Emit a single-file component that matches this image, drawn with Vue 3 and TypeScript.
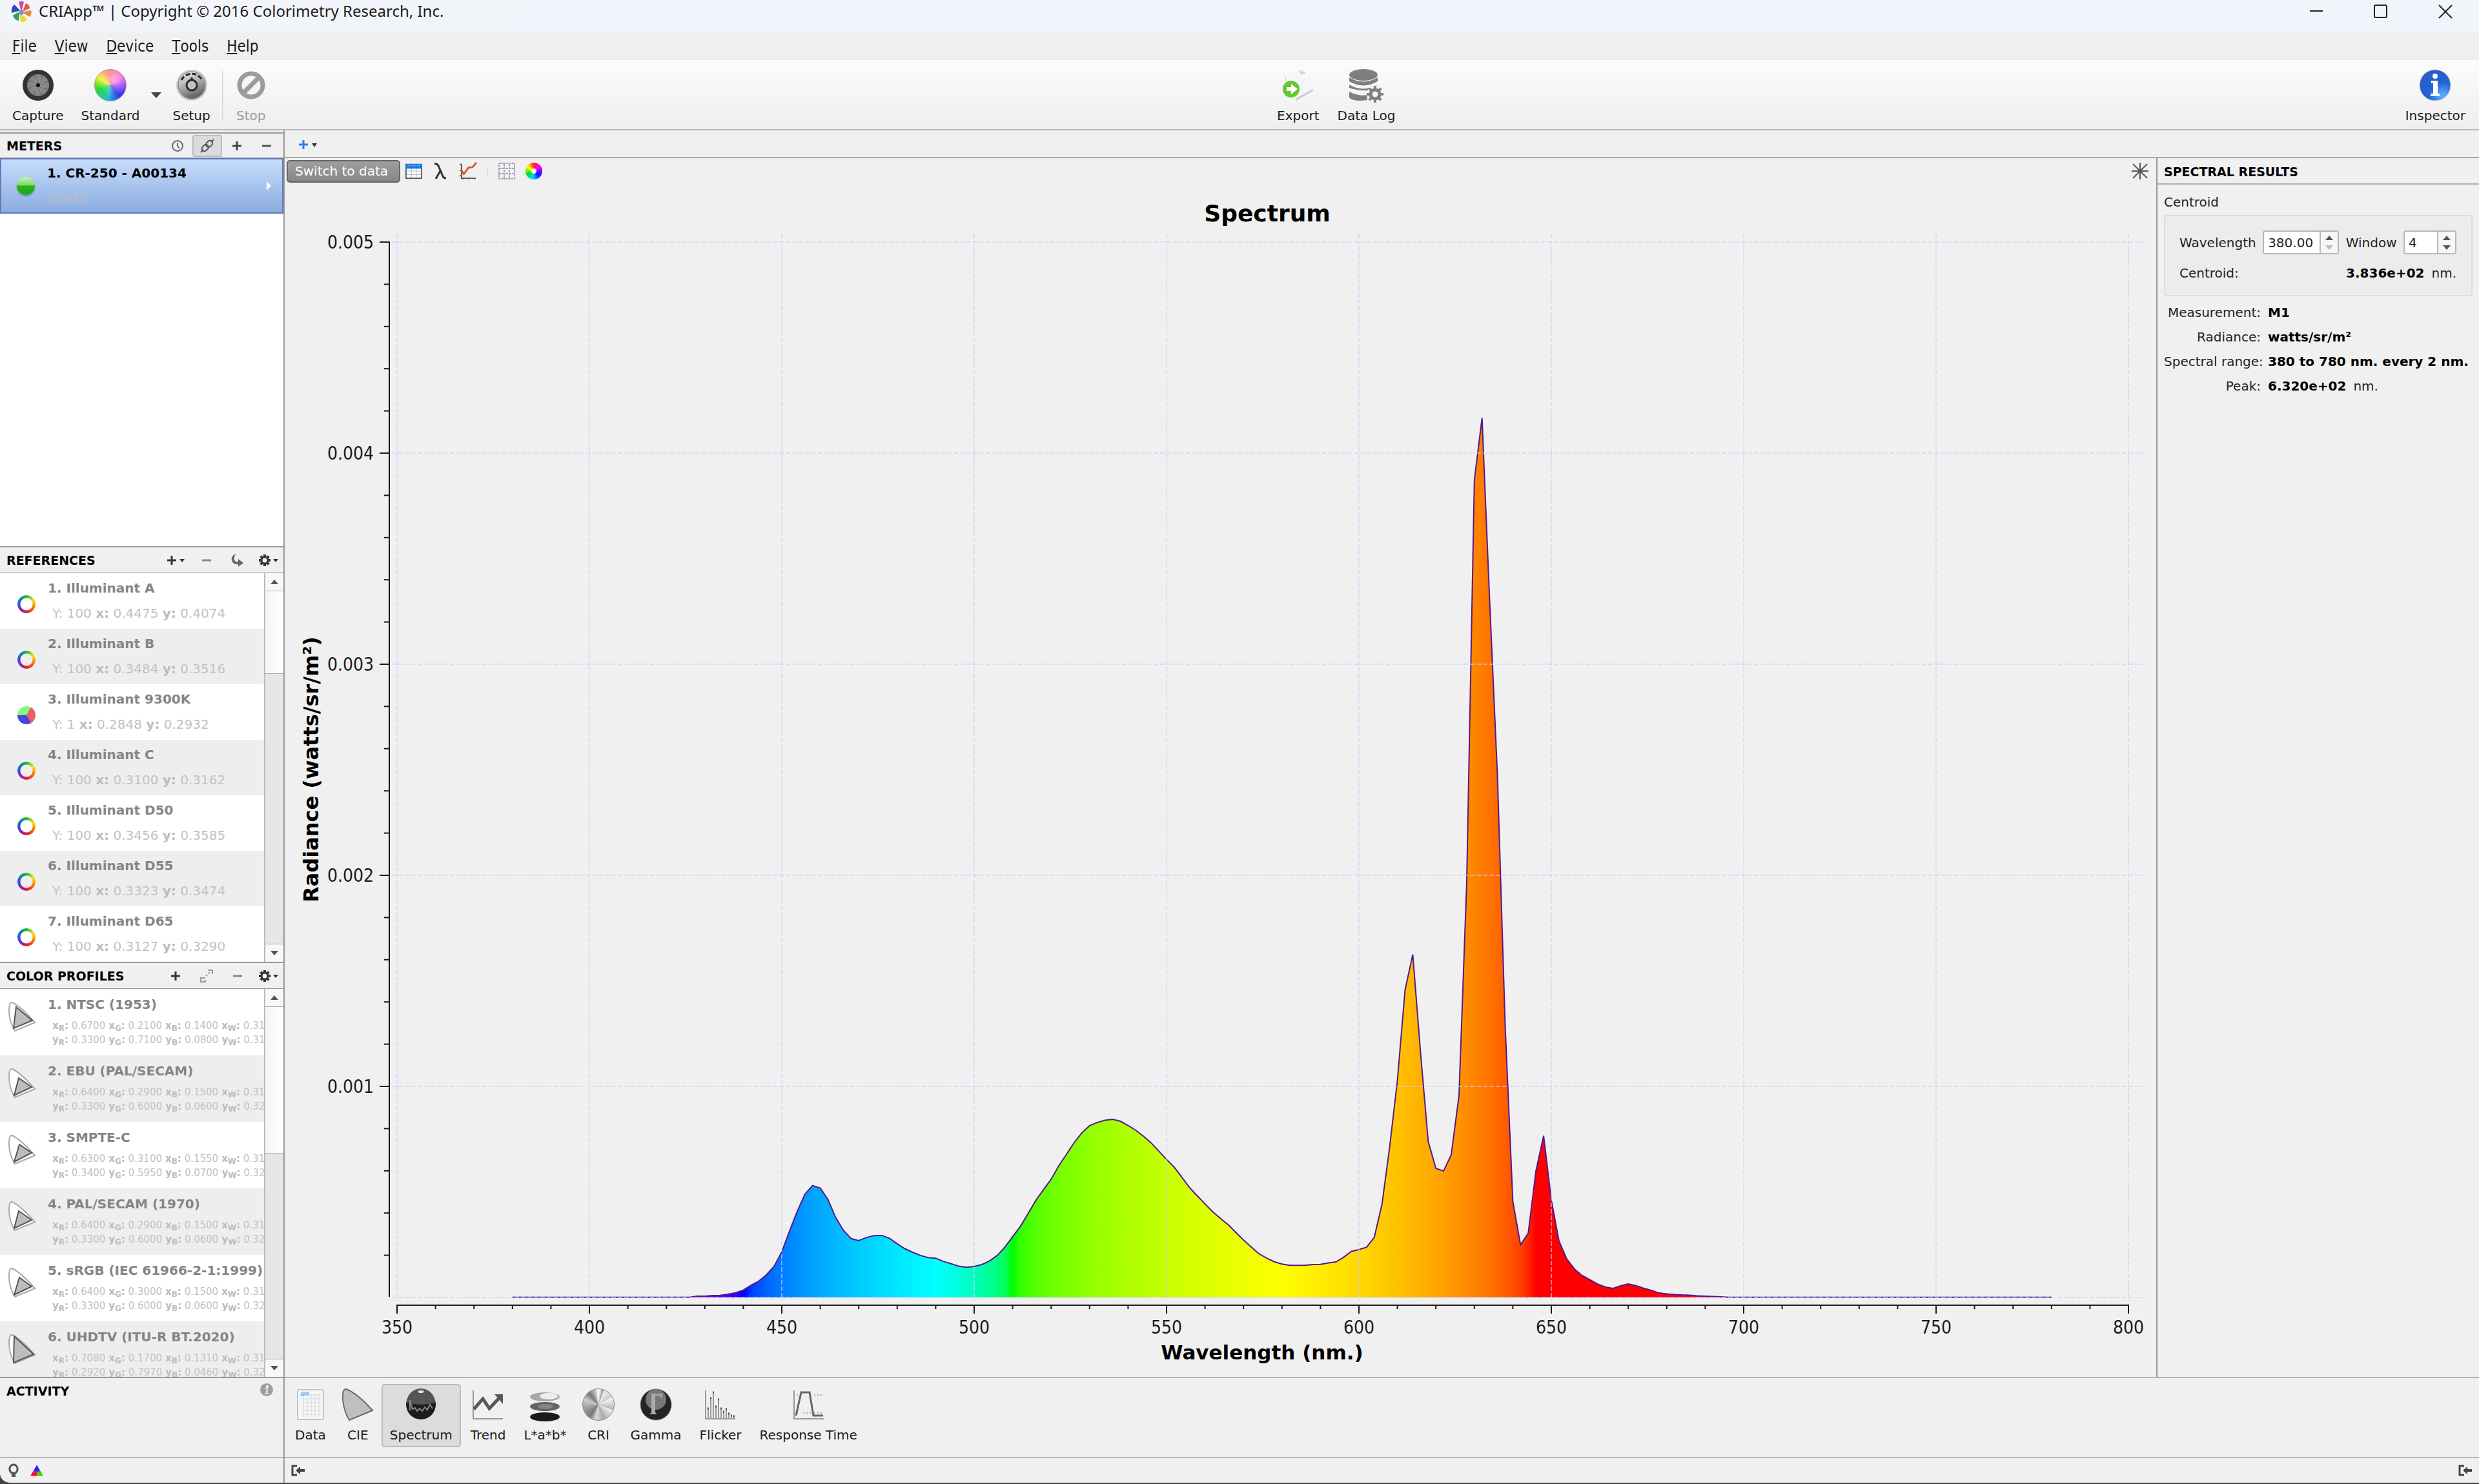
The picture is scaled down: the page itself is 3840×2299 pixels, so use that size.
<script setup lang="ts">
import { ref } from 'vue'

interface Reference { name: string; Y: string; x: string; y: string; mixed?: boolean }
interface Profile { name: string; x: string[]; y: string[]; gamut: string }

const menus = ['File', 'View', 'Device', 'Tools', 'Help']

const references: Reference[] = [
  { name: '1. Illuminant A', Y: '100', x: '0.4475', y: '0.4074' },
  { name: '2. Illuminant B', Y: '100', x: '0.3484', y: '0.3516' },
  { name: '3. Illuminant 9300K', Y: '1', x: '0.2848', y: '0.2932', mixed: true },
  { name: '4. Illuminant C', Y: '100', x: '0.3100', y: '0.3162' },
  { name: '5. Illuminant D50', Y: '100', x: '0.3456', y: '0.3585' },
  { name: '6. Illuminant D55', Y: '100', x: '0.3323', y: '0.3474' },
  { name: '7. Illuminant D65', Y: '100', x: '0.3127', y: '0.3290' },
]

const primaries = ['R', 'G', 'B', 'W']
const profiles: Profile[] = [
  { name: '1. NTSC (1953)', x: ['0.6700', '0.2100', '0.1400', '0.31'], y: ['0.3300', '0.7100', '0.0800', '0.31'], gamut: '12,8 37,29 8,41' },
  { name: '2. EBU (PAL/SECAM)', x: ['0.6400', '0.2900', '0.1500', '0.31'], y: ['0.3300', '0.6000', '0.0600', '0.32'], gamut: '16,15 36,29 9,42' },
  { name: '3. SMPTE-C', x: ['0.6300', '0.3100', '0.1550', '0.31'], y: ['0.3400', '0.5950', '0.0700', '0.32'], gamut: '17,15 36,28 9,42' },
  { name: '4. PAL/SECAM (1970)', x: ['0.6400', '0.2900', '0.1500', '0.31'], y: ['0.3300', '0.6000', '0.0600', '0.32'], gamut: '16,15 36,29 9,42' },
  { name: '5. sRGB (IEC 61966-2-1:1999)', x: ['0.6400', '0.3000', '0.1500', '0.31'], y: ['0.3300', '0.6000', '0.0600', '0.32'], gamut: '17,15 36,29 9,42' },
  { name: '6. UHDTV (ITU-R BT.2020)', x: ['0.7080', '0.1700', '0.1310', '0.31'], y: ['0.2920', '0.7970', '0.0460', '0.32'], gamut: '9,3 39,31 8,44' },
]

const views = ['Data', 'CIE', 'Spectrum', 'Trend', 'L*a*b*', 'CRI', 'Gamma', 'Flicker', 'Response Time']
const activeView = ref('Spectrum')
const wavelength = ref('380.00')
const windowSize = ref('4')

// Radiance in units of 1e-6 W/sr/m², sampled every 2 nm from 380 nm
const radiance: number[] = [
  ...Array<number>(24).fill(1),
  6, 6, 9, 10, 15, 22, 35, 58, 77, 107, 148, 216, 314, 407, 489, 530, 518, 464, 379, 318,
  279, 269, 284, 293, 294, 280, 254, 231, 214, 199, 189, 186, 171, 160, 148, 143, 147, 156, 173, 199,
  239, 288, 336, 397, 459, 510, 560, 624, 678, 734, 780, 814, 829, 839, 844, 835, 815, 792, 764, 732,
  693, 654, 617, 569, 520, 481, 443, 406, 375, 345, 308, 272, 239, 207, 186, 169, 158, 152, 152, 152,
  156, 157, 164, 168, 190, 218, 227, 238, 285, 443, 715, 1029, 1458, 1625, 1162, 739, 612, 599, 676, 957,
  1960, 3872, 4167, 3292, 2467, 1290, 455, 250, 304, 600, 766, 461, 268, 183, 135, 104, 84, 64, 50, 43,
  55, 64, 56, 44, 34, 21, 17, 14, 12, 11, 8, 6, 5, 3,
  ...Array<number>(43).fill(1),
]

const plot = { left: 174, right: 2856, top: 90, bottom: 1725 }
const px = (nm: number) => plot.left + ((nm - 350) / 450) * (plot.right - plot.left)
const py = (value: number) => plot.bottom - (value / 5000) * (plot.bottom - plot.top)

const curve = radiance.map((v, i) => `${px(380 + i * 2).toFixed(1)},${py(v).toFixed(1)}`).join(' ')
const area = `${px(380)},${plot.bottom} ${curve} ${px(780)},${plot.bottom}`

function spectralColor(nm: number): string {
  let r = 0, g = 0, b = 0
  if (nm < 440) { r = (440 - nm) / 60; b = 1 }
  else if (nm < 490) { g = (nm - 440) / 50; b = 1 }
  else if (nm < 510) { g = 1; b = (510 - nm) / 20 }
  else if (nm < 580) { r = (nm - 510) / 70; g = 1 }
  else if (nm < 645) { r = 1; g = (645 - nm) / 65 }
  else r = 1
  const c = (v: number) => Math.round(255 * Math.pow(v, 0.45))
  return `rgb(${c(r)},${c(g)},${c(b)})`
}
const stops = Array.from({ length: 201 }, (_, i) => ({ offset: i / 200, color: spectralColor(380 + i * 2) }))

const xMajor = Array.from({ length: 10 }, (_, i) => 350 + i * 50)
const xMinor = Array.from({ length: 46 }, (_, i) => 350 + i * 10).filter(v => v % 50 !== 0)
const yMajor = [1, 2, 3, 4, 5].map(i => ({ value: i * 1000, label: `0.00${i}` }))
const yMinor = Array.from({ length: 25 }, (_, i) => i * 200).filter(v => v % 1000 !== 0)
const gearAngles = [0, 45, 90, 135, 180, 225, 270, 315]
</script>

<template>
  <div class="app">
    <header class="titlebar">
      <svg class="logo" viewBox="0 0 32 32" aria-hidden="true">
        <path d="M15 13 12 1q5-2 8 0l-3 12z" fill="#c24fb4" />
        <path d="m19 13 4-10q6 2 6 8l-9 4z" fill="#e05a4c" />
        <path d="m20 16 11-2q2 5-2 10l-9-5z" fill="#e98b3a" />
        <path d="m17 20 8 8q-3 5-10 4l-1-11z" fill="#e8dc3c" />
        <path d="m13 19-1 11q-7-1-9-8l8-5z" fill="#32a05c" />
        <path d="m12 15-11 3Q0 9 5 5l8 8z" fill="#3048b8" />
        <circle cx="16" cy="17" r="4" fill="#7d95cf" />
      </svg>
      <h1>CRIApp™ | Copyright © 2016 Colorimetry Research, Inc.</h1>
      <div class="window-controls">
        <button aria-label="Minimize"><svg viewBox="0 0 22 22"><path d="M1 10h20" /></svg></button>
        <button aria-label="Maximize"><svg viewBox="0 0 22 22"><rect x="1" y="1" width="19" height="19" rx="2" /></svg></button>
        <button aria-label="Close"><svg viewBox="0 0 22 22"><path d="m1 1 20 20M21 1 1 21" /></svg></button>
      </div>
    </header>

    <nav class="menubar">
      <button v-for="m in menus" :key="m"><span class="mnemonic">{{ m[0] }}</span>{{ m.slice(1) }}</button>
    </nav>

    <div class="toolbar">
      <div class="tool-group">
        <button class="tool">
          <svg viewBox="0 0 50 50">
            <defs><radialGradient id="lens"><stop offset="0" stop-color="#9a9a9a" /><stop offset="1" stop-color="#808080" /></radialGradient></defs>
            <circle cx="25" cy="25" r="24" fill="#333" /><circle cx="25" cy="25" r="17" fill="url(#lens)" />
            <path v-for="a in gearAngles" :key="a" d="M25 25 Q31 20 31 9" :transform="`rotate(${a} 25 25)`" fill="none" stroke="#666" stroke-width="1" />
            <circle cx="25" cy="25" r="3" fill="#111" />
          </svg>
          <span>Capture</span>
        </button>
        <button class="tool standard"><i class="wheel big"></i><span>Standard</span></button>
        <button class="drop" aria-label="Standard options"><svg viewBox="0 0 16 9"><path d="M0 0h16L8 9z" fill="#444" /></svg></button>
        <button class="tool setup">
          <svg viewBox="0 0 50 50">
            <defs><linearGradient id="dial" x1="0" y1="0" x2=".4" y2="1"><stop offset="0" stop-color="#f4f4f4" /><stop offset=".5" stop-color="#b4b4b4" /><stop offset="1" stop-color="#666" /></linearGradient></defs>
            <circle cx="25" cy="25" r="24" fill="#c9c9c9" /><circle cx="25" cy="25" r="21" fill="url(#dial)" stroke="#777" stroke-width="1" />
            <path d="M9 17A18 18 0 0 1 41 17" fill="none" stroke="#222" stroke-width="3" stroke-dasharray="7 3" />
            <circle cx="25" cy="25" r="8" fill="#c4c4c4" stroke="#2b2b2b" stroke-width="3" /><path d="m21 18 4-6 4 6z" fill="#2b2b2b" />
          </svg>
          <span>Setup</span>
        </button>
        <i class="divider"></i>
        <button class="tool stop" disabled>
          <svg viewBox="0 0 50 50"><circle cx="25" cy="25" r="18" fill="none" stroke="#9c9c9c" stroke-width="7" /><path d="M37 13 13 37" stroke="#9c9c9c" stroke-width="7" /></svg>
          <span>Stop</span>
        </button>
      </div>
      <div class="tool-group export-group">
        <button class="tool">
          <svg viewBox="0 0 50 50">
            <path d="M5 9 29 1l19 33-27 15z" fill="#f3f6f9" /><path d="m21 49 27-15-1-3-26 15zM4 8l3 10-2-1z" fill="#c5ccd4" /><path d="m26 1 11 5-8 3z" fill="#cdd6e0" />
            <circle cx="14" cy="31" r="13" fill="#65c92f" /><path d="M7 28h7v-5l10 8-10 8v-5H7z" fill="#fff" />
          </svg>
          <span>Export</span>
        </button>
        <button class="tool">
          <svg viewBox="0 0 50 50">
            <g fill="#7f7f7f"><ellipse cx="21" cy="9" rx="22" ry="9" />
              <path d="M-1 13q22 13 44 0v6q-22 13-44 0zM-1 24q22 13 44 0v1q-12 1-14 8-18 1-30-4zM-1 35q16 8 28 5v8Q5 51-1 44z" /></g>
            <g transform="translate(39 39)"><circle r="13" fill="#f4f4f4" />
              <rect v-for="a in gearAngles" :key="a" x="-2" y="-13" width="4" height="6" fill="#7f7f7f" :transform="`rotate(${a})`" />
              <circle r="7" fill="none" stroke="#7f7f7f" stroke-width="5" /></g>
          </svg>
          <span>Data Log</span>
        </button>
      </div>
      <div class="tool-group">
        <button class="tool">
          <svg viewBox="0 0 50 50">
            <defs><radialGradient id="info" cx=".75" cy=".85" r=".9"><stop offset="0" stop-color="#5fb4fb" /><stop offset=".5" stop-color="#2263d4" /><stop offset="1" stop-color="#2c5ac8" /></radialGradient></defs>
            <circle cx="25" cy="25" r="24" fill="url(#info)" stroke="#b9c7e4" stroke-width="1" />
            <circle cx="25" cy="11" r="4" fill="#fff" /><path d="M19 18h10v20h3v4H18v-4h4V22h-3z" fill="#fff" />
          </svg>
          <span>Inspector</span>
        </button>
      </div>
    </div>

    <div class="workspace">
      <aside class="sidebar">
        <section class="panel meters">
          <header>
            <h2>METERS</h2>
            <div class="actions">
              <button aria-label="History"><svg viewBox="0 0 20 20"><circle cx="10" cy="10" r="8" fill="none" stroke="#666" stroke-width="2" /><path d="M10 5v5l3 4" fill="none" stroke="#666" stroke-width="2" /></svg></button>
              <button class="pressed" aria-label="Connect"><svg viewBox="0 0 20 20" fill="none" stroke="#555" stroke-width="2"><path d="m0 20 4-4M16 4l4-4" /><g transform="rotate(45 10 10)"><rect x="6" y="0" width="8" height="11" rx="4" /><rect x="6" y="9" width="8" height="11" rx="4" /></g></svg></button>
              <button aria-label="Add meter"><svg viewBox="0 0 20 20"><path d="M10 3v14M3 10h14" stroke="#444" stroke-width="3" /></svg></button>
              <button aria-label="Remove meter"><svg viewBox="0 0 20 20"><path d="M3 10h14" stroke="#555" stroke-width="3" /></svg></button>
            </div>
          </header>
          <div class="meter-list">
            <div class="meter">
              <i class="led"></i>
              <div><strong>1. CR-250 - A00134</strong><span>COM3</span></div>
              <svg viewBox="0 0 7 14"><path d="m0 0 7 7-7 7z" fill="#fff" /></svg>
            </div>
          </div>
        </section>

        <section class="panel">
          <header>
            <h2>REFERENCES</h2>
            <div class="actions">
              <button class="wide" aria-label="Add reference"><svg viewBox="0 0 28 20"><path d="M8 3v14M1 10h14" stroke="#333" stroke-width="3" /><path d="M20 8h8l-4 5z" fill="#333" /></svg></button>
              <button aria-label="Remove reference"><svg viewBox="0 0 20 20"><path d="M3 10h14" stroke="#888" stroke-width="3" /></svg></button>
              <button aria-label="Apply reference"><svg viewBox="0 0 20 20"><path d="M8 0Q-1 3 1 10q2 7 10 6v4l8-6-8-6v4q-5 1-6-3Q4 4 8 0" fill="#666" /></svg></button>
              <button class="wide" aria-label="Reference options"><svg viewBox="0 0 30 20"><g transform="translate(9 10)"><rect v-for="a in gearAngles" :key="a" x="-2" y="-9" width="4" height="5" fill="#333" :transform="`rotate(${a})`" /><circle r="5" fill="none" stroke="#333" stroke-width="3" /></g><path d="M22 8h8l-4 5z" fill="#333" /></svg></button>
            </div>
          </header>
          <div class="list-frame">
            <ul class="rows">
              <li v-for="r in references" :key="r.name" class="reference">
                <i :class="r.mixed ? 'pie' : 'ring'"></i>
                <div>
                  <strong>{{ r.name }}</strong>
                  <span class="values">Y: {{ r.Y }} <b>x:</b> {{ r.x }} <b>y:</b> {{ r.y }}</span>
                </div>
              </li>
            </ul>
            <div class="scrollbar">
              <button aria-label="Scroll up"><svg viewBox="0 0 12 7"><path d="m0 7 6-7 6 7z" fill="#555" /></svg></button>
              <i class="thumb refs"></i>
              <button class="down" aria-label="Scroll down"><svg viewBox="0 0 12 7"><path d="m0 0 6 7 6-7z" fill="#555" /></svg></button>
            </div>
          </div>
        </section>

        <section class="panel profiles">
          <header>
            <h2>COLOR PROFILES</h2>
            <div class="actions">
              <button aria-label="Add profile"><svg viewBox="0 0 20 20"><path d="M10 3v14M3 10h14" stroke="#333" stroke-width="3" /></svg></button>
              <button aria-label="Duplicate profile"><svg viewBox="0 0 20 20" fill="none" stroke="#999" stroke-width="2"><path d="M12 1h7v6M8 13H1v6h7v-3M9 10l2-2M13 6l2-2" /></svg></button>
              <button aria-label="Remove profile"><svg viewBox="0 0 20 20"><path d="M3 10h14" stroke="#888" stroke-width="3" /></svg></button>
              <button class="wide" aria-label="Profile options"><svg viewBox="0 0 30 20"><g transform="translate(9 10)"><rect v-for="a in gearAngles" :key="a" x="-2" y="-9" width="4" height="5" fill="#333" :transform="`rotate(${a})`" /><circle r="5" fill="none" stroke="#333" stroke-width="3" /></g><path d="M22 8h8l-4 5z" fill="#333" /></svg></button>
            </div>
          </header>
          <div class="list-frame profile-frame">
            <ul class="rows">
              <li v-for="p in profiles" :key="p.name" class="profile">
                <svg viewBox="0 0 42 48"><path d="M6 1Q1 0 1 14q0 16 9 31l31-13Q20 8 6 1" fill="#fff" stroke="#aaa" stroke-width="2" /><polygon :points="p.gamut" fill="#bdbdbd" stroke="#555" stroke-width="2" /></svg>
                <div>
                  <strong>{{ p.name }}</strong>
                  <span class="small"><span v-for="(v, i) in p.x" :key="i"><b>x<sub>{{ primaries[i] }}</sub>:</b> {{ v }}</span></span>
                  <span class="small"><span v-for="(v, i) in p.y" :key="i"><b>y<sub>{{ primaries[i] }}</sub>:</b> {{ v }}</span></span>
                </div>
              </li>
            </ul>
            <div class="scrollbar">
              <button aria-label="Scroll up"><svg viewBox="0 0 12 7"><path d="m0 7 6-7 6 7z" fill="#555" /></svg></button>
              <i class="thumb profs"></i>
              <button class="down" aria-label="Scroll down"><svg viewBox="0 0 12 7"><path d="m0 0 6 7 6-7z" fill="#555" /></svg></button>
            </div>
          </div>
        </section>

        <section class="activity">
          <h2>ACTIVITY</h2>
          <button aria-label="Activity details"><svg viewBox="0 0 22 22"><circle cx="11" cy="11" r="10" fill="#9b9fa3" /><circle cx="12" cy="6" r="2" fill="#fff" /><path d="M8 9h5l-1 7h2v1H8v-1h2l1-6H8z" fill="#fff" /></svg></button>
        </section>

        <footer class="status">
          <button aria-label="Illuminant"><svg viewBox="0 0 16 20"><path d="M5 14Q1 10 2 6q2-5 6-5t6 5q1 4-3 8z" fill="none" stroke="#555" stroke-width="3" /><path d="M5 15h6v5H5z" fill="#555" /></svg></button>
          <button aria-label="Gamut"><i class="gamut"></i></button>
        </footer>
      </aside>

      <main class="content">
        <div class="tabstrip">
          <button aria-label="New tab"><svg viewBox="0 0 30 14"><path d="M7 0v14M0 7h14" stroke="#2f7df0" stroke-width="3" /><path d="M20 5h8l-4 6z" fill="#333" /></svg></button>
        </div>

        <div class="viewer">
          <section class="view">
            <div class="viewbar">
              <button class="switch"><span>Switch to data</span></button>
              <button aria-label="Table"><svg viewBox="0 0 28 26"><rect x="1" y="2" width="26" height="23" fill="#fff" stroke="#4d5c70" stroke-width="2" /><path d="M0 1h28v8H0z" fill="#1a75dd" /><path d="M3 4h6M11 4h6M19 4h6" stroke="#5aa8ff" stroke-width="2" /><path d="M2 13h24M2 19h24M10 9v15M18 9v15" stroke="#a9b6c6" stroke-width="1" /></svg></button>
              <button aria-label="Wavelength"><svg viewBox="0 0 22 26"><path d="M1 2q5-1 7 5l6 14q1 3 5 3M11 11 3 25" fill="none" stroke="#333" stroke-width="3" /></svg></button>
              <button aria-label="Curve"><svg viewBox="0 0 28 28"><path d="M3 2v24h24M0 3h3M0 13h3M0 22h3M5 25v3M15 25v3M25 25v3" fill="none" stroke="#555" stroke-width="2" /><path d="m3 13 4 6 8-11h6l7-8" fill="none" stroke="#d9502e" stroke-width="3" /></svg></button>
              <i class="sep"></i>
              <button aria-label="Grid"><svg viewBox="0 0 26 26"><path d="M1 1h24v24H1zM9 1v24M17 1v24M1 9h24M1 17h24" fill="none" stroke="#a3abb5" stroke-width="2" stroke-dasharray="4 1" /></svg></button>
              <button aria-label="Colors"><i class="wheel mini"></i></button>
              <button class="spark" aria-label="Autoscale"><svg viewBox="0 0 26 26"><path d="M13 0v26M0 13h26M2 2l22 22M24 2 2 24" stroke="#555" stroke-width="2" /></svg></button>
            </div>

            <svg class="chart" viewBox="0 0 2899 1848" role="img" aria-label="Spectrum">
              <defs>
                <linearGradient id="spectrum" gradientUnits="userSpaceOnUse" :x1="px(380)" :x2="px(780)" y1="0" y2="0">
                  <stop v-for="s in stops" :key="s.offset" :offset="s.offset" :stop-color="s.color" />
                </linearGradient>
              </defs>
              <text class="chart-title" x="1522" y="58">Spectrum</text>
              <polygon :points="area" fill="url(#spectrum)" />
              <polyline class="curve" :points="curve" />
              <g class="grid">
                <line v-for="v in xMajor" :key="v" :x1="px(v)" :x2="px(v)" y1="78" y2="1730" />
                <line v-for="t in yMajor" :key="t.value" x1="166" x2="2878" :y1="py(t.value)" :y2="py(t.value)" />
                <line x1="166" x2="2878" :y1="plot.bottom" :y2="plot.bottom" />
              </g>
              <g class="axis">
                <line x1="162" x2="162" :y1="plot.top - 1" :y2="plot.bottom - 1" />
                <line v-for="t in yMajor" :key="t.value" x1="147" x2="162" :y1="py(t.value)" :y2="py(t.value)" />
                <line v-for="v in yMinor" :key="v" x1="154" x2="162" :y1="py(v)" :y2="py(v)" />
                <line :x1="plot.left - 1" :x2="plot.right + 1" y1="1737" y2="1737" />
                <line v-for="v in xMajor" :key="v" :x1="px(v)" :x2="px(v)" y1="1737" y2="1750" />
                <line v-for="v in xMinor" :key="v" :x1="px(v)" :x2="px(v)" y1="1737" y2="1743" />
              </g>
              <g class="tick-y"><text v-for="t in yMajor" :key="t.value" x="138" :y="py(t.value) + 10">{{ t.label }}</text></g>
              <g class="tick-x"><text v-for="v in xMajor" :key="v" :x="px(v)" y="1781">{{ v }}</text></g>
              <text class="axis-title" x="1514" y="1821">Wavelength (nm.)</text>
              <text class="axis-title upright" transform="translate(52 907) rotate(-90)">Radiance (watts/sr/m²)</text>
            </svg>
          </section>

          <aside class="inspector">
            <h2>SPECTRAL RESULTS</h2>
            <fieldset>
              <legend>Centroid</legend>
              <div class="box">
                <div class="line">
                  <label for="wavelength">Wavelength</label>
                  <span class="spin"><input id="wavelength" v-model="wavelength" type="text" />
                    <span class="arrows"><button aria-label="Increase wavelength"><svg viewBox="0 0 12 7"><path d="m0 7 6-7 6 7z" fill="#555" /></svg></button><button aria-label="Decrease wavelength" disabled><svg viewBox="0 0 12 7"><path d="m0 0 6 7 6-7z" fill="#bbb" /></svg></button></span></span>
                  <label for="window">Window</label>
                  <span class="spin narrow"><input id="window" v-model="windowSize" type="text" />
                    <span class="arrows"><button aria-label="Increase window"><svg viewBox="0 0 12 7"><path d="m0 7 6-7 6 7z" fill="#555" /></svg></button><button aria-label="Decrease window"><svg viewBox="0 0 12 7"><path d="m0 0 6 7 6-7z" fill="#555" /></svg></button></span></span>
                </div>
                <div class="line result"><span>Centroid:</span><output><b>3.836e+02</b><span>nm.</span></output></div>
              </div>
            </fieldset>
            <dl>
              <dt>Measurement:</dt><dd><b>M1</b></dd>
              <dt>Radiance:</dt><dd><b>watts/sr/m²</b></dd>
              <dt>Spectral range:</dt><dd><b>380 to 780 nm. every 2 nm.</b></dd>
              <dt>Peak:</dt><dd><b>6.320e+02</b><span>nm.</span></dd>
            </dl>
          </aside>
        </div>

        <nav class="views">
          <button v-for="v in views" :key="v" :class="{ active: v === activeView }" @click="activeView = v">
            <svg v-if="v === 'Data'" viewBox="0 0 50 50"><rect x="5" y="2" width="40" height="46" rx="2" fill="#f4f6f8" stroke="#c3c6c9" stroke-width="2" /><path d="M11 10h30M11 16h30M11 22h30M11 28h30M11 34h30M11 40h30M14 8v36M20 8v36M26 8v36M32 8v36M38 8v36" stroke="#d4d9de" stroke-width="1" /><path d="M13 12V8h10M12 8v4" stroke="#9cc8f7" stroke-width="5" fill="none" /></svg>
            <svg v-else-if="v === 'CIE'" viewBox="0 0 50 50"><path d="M7 1Q1 0 2 18q2 18 10 31l36-15Q24 7 7 1" fill="#bdc0be" stroke="#6c6c6c" stroke-width="2" /></svg>
            <svg v-else-if="v === 'Spectrum'" viewBox="0 0 50 50"><circle cx="25" cy="25" r="23" fill="#1d1d1d" /><path d="M3 22A22 22 0 0 1 47 22Q25 28 3 22" fill="#555" /><path d="M20 4q5-2 10 0l-2 3h-6z" fill="#ddd" /><path d="M8 34V18l4 14 4-2 3 5 4-4 4 4 4-6 4 4 4-8 4 6" fill="none" stroke="#888" stroke-width="2" /></svg>
            <svg v-else-if="v === 'Trend'" viewBox="0 0 50 50"><path d="M2 3v44h46" fill="none" stroke="#999" stroke-width="2" /><path d="m3 32 14-16 10 15 16-17" fill="none" stroke="#585858" stroke-width="5" /><path d="M35 9h13v15z" fill="#585858" /></svg>
            <svg v-else-if="v === 'L*a*b*'" viewBox="0 0 50 50"><ellipse cx="25" cy="13" rx="23" ry="7" fill="#a8a8a8" /><ellipse cx="31" cy="12" rx="14" ry="5" fill="#ededed" /><ellipse cx="25" cy="28" rx="23" ry="7" fill="#636363" /><ellipse cx="26" cy="28" rx="12" ry="4" fill="#858585" /><ellipse cx="25" cy="44" rx="23" ry="7" fill="#1c1c1c" /></svg>
            <i v-else-if="v === 'CRI'" class="cri"></i>
            <svg v-else-if="v === 'Gamma'" viewBox="0 0 50 50"><circle cx="25" cy="25" r="24" fill="#242424" stroke="#777" stroke-width="1" /><circle cx="25" cy="17" r="16" fill="#777" /><path d="M18 8h17v6h-3v-3h-8v26l3 3H15l3-3z" fill="#aaa" /></svg>
            <svg v-else-if="v === 'Flicker'" viewBox="0 0 50 50"><path d="M2 3v44h46M6 47V31M10 47V15M14 47V6M18 47V28M22 47V16M26 47V31M30 47V36M34 47V32M38 47V39M42 47V42M46 47V43" fill="none" stroke="#999" stroke-width="2" /><path d="M5 31h2M9 15h2M13 6h2M17 28h2M21 17h2M25 31h2M29 36h2M33 32h2M37 39h2M41 42h2M45 43h2" stroke="#444" stroke-width="3" /></svg>
            <svg v-else viewBox="0 0 50 50"><path d="M3 3v44h46" fill="none" stroke="#999" stroke-width="2" /><path d="M7 10h4M34 10h14M7 38h4M34 38h14M17 38h12" stroke="#aaa" stroke-width="2" stroke-dasharray="2 3" /><path d="m6 42 8-36h13l6 36h15" fill="none" stroke="#666" stroke-width="3" /></svg>
            <span>{{ v }}</span>
          </button>
        </nav>

        <footer class="status ends">
          <button aria-label="Collapse left panel"><svg viewBox="0 0 22 18"><path d="M9 2H2v14h7" fill="none" stroke="#444" stroke-width="3" /><path d="M7 9l7-6v4h7v4h-7v4z" fill="#444" /></svg></button>
          <button aria-label="Collapse right panel"><svg viewBox="0 0 22 18"><path d="M9 2H2v14h7" fill="none" stroke="#444" stroke-width="3" /><path d="M7 9l7-6v4h7v4h-7v4z" fill="#444" /></svg></button>
        </footer>
      </main>
    </div>
  </div>
</template>

<style>
body { margin: 0; background: #444; }
</style>

<style scoped>
* { box-sizing: border-box; }
.app { min-height: 100vh; display: flex; flex-direction: column; background: #f0f0f0; color: #1a1a1a; border-bottom: 2px solid #444; border-radius: 0 0 0 16px; font: 20px/26px "DejaVu Sans", sans-serif; }
button { font: inherit; color: inherit; background: none; border: 0; padding: 0; display: flex; align-items: center; justify-content: center; }
svg { display: block; overflow: visible; }
h1, h2, dl, dd, ul, fieldset { margin: 0; padding: 0; border: 0; }
h2 { font-size: 19px; line-height: 26px; color: #000; }

.titlebar { height: 50px; display: flex; align-items: flex-start; padding: 2px 41px 0 17px; gap: 11px; background: linear-gradient(90deg, #f3f5f8, #f0f4fb 30%); }
.logo { width: 32px; height: 32px; }
h1 { flex: 1; font: 24px/30px "Noto Sans", sans-serif; }
.window-controls { display: flex; gap: 78px; padding-top: 5px; }
.window-controls svg { width: 22px; height: 22px; fill: none; stroke: #222; stroke-width: 2; }

.menubar { height: 41px; display: flex; gap: 28px; padding: 2px 19px 0; font: 24px/36px "DejaVu Sans Condensed", "DejaVu Sans", sans-serif; }
.mnemonic { text-decoration: underline; text-decoration-thickness: 2px; text-underline-offset: 2px; }

.toolbar { height: 111px; display: flex; justify-content: space-between; padding: 15px 21px 0 19px; border-top: 1px solid #c9c9c9; border-bottom: 2px solid #b8b8b8; background: linear-gradient(#fcfcfc, #eee); }
.tool-group { display: flex; align-items: flex-start; }
.export-group { gap: 28px; }
.tool { flex-direction: column; gap: 9px; }
.tool svg { width: 50px; height: 50px; }
.standard { margin-left: 27px; }
.drop { height: 80px; margin: 0 18px 0 17px; }
.drop svg { width: 16px; height: 9px; }
.divider { width: 2px; height: 78px; margin: 3px 18px 0; background: #ddd; }
.stop { color: #999; }
.wheel { display: block; border-radius: 50%; background: radial-gradient(circle at 60% 30%, #fff8, #fff0 60%), conic-gradient(#ff5a7a, #ff4fd0 50deg, #7a30ff 100deg, #2b38e8 140deg, #28c0d0 190deg, #20dd30 250deg, #f4f020 305deg, #ff5a7a); }
.wheel.big { width: 50px; height: 50px; border: 1px solid #999; }
.wheel.mini { width: 26px; height: 26px; background: radial-gradient(circle, #fff 3px, #fff0 5px), conic-gradient(#f22, #f0f 55deg, #70f 90deg, #02f 135deg, #0df 190deg, #0d2 245deg, #ff0 305deg, #f22); }

.workspace { flex: 1; display: grid; grid-template-columns: 441px minmax(0, 1fr); }
.sidebar { display: flex; flex-direction: column; padding-top: 3px; border-right: 2px solid #999; min-width: 0; }
.panel { border-top: 2px solid #999; }
.panel > header { height: 40px; display: flex; align-items: center; justify-content: space-between; padding: 0 3px 0 10px; border-bottom: 1px solid #999; }
.actions { display: flex; align-items: center; gap: 8px; }
.actions button { width: 40px; height: 32px; }
.actions svg { width: 20px; height: 20px; }
.actions .wide svg { width: 30px; }
.meters { flex: 1; display: flex; flex-direction: column; }
.meters .actions { gap: 0; }
.meters .actions button { width: 46px; }
.panel.meters > header { height: 38px; }
.actions .pressed { height: 34px; border: 2px solid #bbb; border-radius: 4px; background: #dcdcdc; }
.meter-list { flex: 1; background: #fff; }
.meter { height: 86px; display: flex; align-items: center; padding: 0 17px 0 24px; border: 2px solid #6874bb; background: linear-gradient(#c6ddfd, #8aacdf); }
.meter div { flex: 1; margin-left: 19px; display: flex; flex-direction: column; gap: 14px; }
.meter strong { color: #000; }
.meter span { color: #b9bdc6; }
.meter svg { width: 7px; height: 14px; }
.led { width: 28px; height: 28px; border-radius: 50%; background: linear-gradient(#c9f5b4, #7bdc66 45%, #2bb41e 50%, #1fa51a); box-shadow: 0 2px 2px #0004; }

.list-frame { display: flex; background: #fff; }
.profile-frame { height: 601px; overflow: hidden; }
.rows { flex: 1; min-width: 0; list-style: none; overflow: hidden; }
.rows li { display: flex; white-space: nowrap; }
.rows li:nth-child(even) { background: #eee; }
.rows strong { display: block; color: #858585; }
.reference { height: 86px; padding: 10px 0 0 27px; gap: 19px; }
.reference i { width: 28px; height: 28px; margin-top: 24px; border-radius: 50%; }
.ring { background: conic-gradient(#1db82a, #f3e51b 60deg, #f80 105deg, #e21c2a 175deg, #7d2ad0 235deg, #2b55e0 275deg, #0a9a9a 330deg, #1db82a); mask: radial-gradient(circle, #0000 9px, #000 10px); }
.pie { background: conic-gradient(from 30deg, #ea6060 120deg, #4646dd 120deg 240deg, #84f684 240deg); }
.values { display: block; margin: 13px 0 0 7px; color: #c2c2c2; }
.profile { height: 103px; padding: 11px 0 0 13px; gap: 19px; }
.profile svg { width: 42px; height: 48px; margin-top: 9px; flex: none; }
.small { display: flex; gap: 5px; margin-left: 7px; font-size: 15px; line-height: 22px; color: #c2c2c2; }
.profile strong { margin-bottom: 9px; }
.small sub { font-size: 12px; line-height: 0; vertical-align: -3px; }
.small b, .values b { color: #bdbdbd; }
.scrollbar { width: 30px; flex: none; display: flex; flex-direction: column; background: #e6e6e6; border-left: 2px solid #bbb; }
.scrollbar button { height: 28px; background: #f8f8f8; border-bottom: 1px solid #aaa; }
.scrollbar .down { margin-top: auto; border: 0; border-top: 1px solid #aaa; }
.scrollbar svg { width: 12px; height: 7px; }
.thumb { background: linear-gradient(90deg, #f4f4f4, #fff); border-bottom: 1px solid #aaa; }
.refs { height: 128px; }
.profs { height: 227px; }

.activity { height: 124px; display: flex; justify-content: space-between; align-items: flex-start; padding: 7px 15px 0 10px; border-top: 2px solid #999; }
.activity svg { width: 22px; height: 22px; }
.status { height: 40px; display: flex; align-items: center; padding: 0 12px; gap: 17px; border-top: 2px solid #b5b5b5; }
.status svg { width: 18px; height: 20px; }
.ends { justify-content: space-between; padding: 0 10px; }
.ends svg { width: 22px; height: 18px; }
.gamut { width: 20px; height: 17px; clip-path: polygon(50% 0, 100% 100%, 0 100%); background: conic-gradient(from -30deg at 50% 60%, #22f, #22f 60deg, #0d0 130deg, #7c0 180deg, #f00 240deg, #f0c 300deg, #22f); }

.content { display: flex; flex-direction: column; min-width: 0; }
.tabstrip { height: 43px; display: flex; align-items: center; padding: 2px 0 0 22px; border-bottom: 2px solid #a9a9a9; }
.tabstrip svg { width: 30px; height: 14px; }
.viewer { flex: 1; display: grid; grid-template-columns: minmax(0, 1fr) 500px; }
.viewbar { height: 40px; display: flex; align-items: center; padding: 0 12px 0 3px; }
.viewbar button { margin-right: 16px; }
.viewbar svg { width: 26px; height: 26px; }
.viewbar .switch { width: 176px; height: 35px; margin-right: 8px; padding-right: 6px; border: 2px solid #666; border-radius: 5px; background: linear-gradient(#9f9f9f, #868686); color: #fff; white-space: nowrap; }
.sep { width: 2px; height: 14px; margin-right: 16px; background: #ddd; }
.viewbar .spark { margin: 0 0 0 auto; }
.chart { width: 100%; height: auto; fill: #1a1a1a; }
.chart-title { font-weight: bold; font-size: 36px; text-anchor: middle; fill: #000; }
.axis-title { font-weight: bold; font-size: 31px; text-anchor: middle; fill: #000; }
.upright { font-size: 32px; }
.curve { fill: none; stroke: #56188c; stroke-width: 2px; }
.grid { stroke: #cdcdff; stroke-opacity: .6; stroke-width: 2px; stroke-dasharray: 7 3; }
.axis { stroke: #1a1a1a; stroke-width: 2px; }
.tick-x, .tick-y { font: 28px "DejaVu Sans Condensed", "DejaVu Sans", sans-serif; text-anchor: middle; }
.tick-y { text-anchor: end; }

.inspector { border-left: 2px solid #999; color: #222; }
.inspector h2 { height: 41px; padding: 8px 0 0 10px; border-bottom: 2px solid #b0b0b0; }
.inspector b { color: #000; }
fieldset { padding: 14px 10px 0; }
legend { float: left; padding: 0; width: 100%; margin-bottom: 7px; }
.box { clear: both; height: 126px; padding: 22px 23px 0 22px; border: 2px solid #ddd; border-radius: 4px; background: #ececec; }
.line { display: flex; align-items: center; justify-content: space-between; }
.spin { width: 118px; height: 37px; display: flex; border: 2px solid #b8b8b8; border-radius: 4px; background: #fff; }
.narrow { width: 82px; }
.spin input { flex: 1; min-width: 0; padding: 0 0 0 6px; border: 0; background: none; font: inherit; color: inherit; }
.arrows { width: 28px; flex: none; display: flex; flex-direction: column; justify-content: center; gap: 8px; border-left: 2px solid #b8b8b8; background: #f6f6f6; }
.arrows svg { width: 12px; height: 7px; }
.result { margin-top: 16px; }
output span, dd span { margin-left: 11px; }
dl { display: grid; grid-template-columns: 150px 1fr; column-gap: 11px; row-gap: 12px; padding: 12px 0 0 10px; }
dt { text-align: right; white-space: nowrap; }
dd { white-space: nowrap; }

.views { height: 124px; display: flex; align-items: flex-start; gap: 2px; padding: 9px 3px 0; border-top: 2px solid #b0b0b0; }
.views button { flex-direction: column; justify-content: flex-start; gap: 9px; min-width: 69px; height: 98px; padding: 5px 11px 0; border: 2px solid transparent; border-radius: 5px; white-space: nowrap; }
.views .active { background: #dcdcdc; border-color: #bbb; }
.views svg, .views i { width: 50px; height: 50px; margin: 0 -5px; flex: none; }
.cri { border-radius: 50%; border: 1px solid #888; background: conic-gradient(#fff, #999 20deg, #eee 22deg, #ccc 60deg, #f4f4f4 62deg, #bbb 110deg, #eee 112deg, #aaa 160deg, #ddd 190deg, #777 215deg, #999 250deg, #ccc 290deg, #777 320deg, #bbb 345deg, #fff); }
</style>
